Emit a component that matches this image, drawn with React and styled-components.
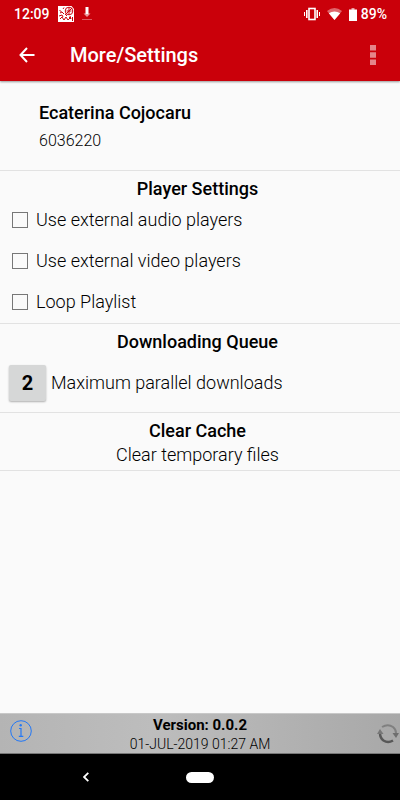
import React from "react";
import styled, { createGlobalStyle } from "styled-components";

const Global = createGlobalStyle`
  *, *::before, *::after { box-sizing: border-box; }
  body { margin: 0; background: #fafafa; }
  button, input { font: inherit; color: inherit; }
  svg { display: block; flex: none; }
`;

const Screen = styled.div`
  min-height: 100vh;
  display: flex;
  flex-direction: column;
  background: #fafafa;
  color: #000;
  font-family: Roboto, "Noto Sans", sans-serif;
  font-size: 18px;
  font-weight: 300;
  line-height: 24px;
`;

const Header = styled.header`
  background: #ca000a;
  color: #fff;
  box-shadow: 0 1px 2px rgba(0, 0, 0, 0.4);
`;

const StatusBar = styled.div`
  height: 28px;
  padding: 0 13px 0 14px;
  display: flex;
  align-items: center;
  justify-content: space-between;
  font-size: 14px;
  font-weight: 500;
`;

const StatusGroup = styled.div`
  display: flex;
  align-items: center;
  gap: ${(p) => p.$gap}px;
`;

const AppBar = styled.div`
  height: 53px;
  padding: 0 15px;
  display: flex;
  align-items: center;
`;

const IconButton = styled.button`
  width: 24px;
  height: 24px;
  padding: 0;
  border: 0;
  background: none;
  display: grid;
  place-items: center;
  cursor: pointer;
`;

const Title = styled.h1`
  flex: 1;
  margin: 0 0 0 31px;
  font-size: 20px;
  font-weight: 500;
`;

const Main = styled.main`
  flex: 1;
`;

const Section = styled.section`
  border-bottom: 1px solid #e2e2e2;
  padding-bottom: ${(p) => p.$bottom || 0}px;
`;

const Profile = styled(Section)`
  padding: 20px 39px 18px;
`;

const Name = styled.h2`
  margin: 0;
  font-size: 18px;
  font-weight: 500;
`;

const UserId = styled.p`
  margin: 5px 0 0;
  font-size: 16px;
  line-height: 22px;
`;

const Heading = styled.h2`
  margin: 0;
  padding: 6px 5px 0 0;
  font-size: 18px;
  font-weight: 500;
  text-align: center;
`;

const CheckList = styled.div`
  margin-top: -2px;
  padding-bottom: 1px;
`;

const CheckRow = styled.label`
  height: 41px;
  padding-left: 12px;
  display: flex;
  align-items: center;
  gap: 8px;
`;

const Checkbox = styled.input`
  appearance: none;
  width: 16px;
  height: 16px;
  margin: 0;
  border: 1px solid #777;
  &:checked { background: #777; }
`;

const CountRow = styled.div`
  padding: 11px 9px;
  display: flex;
  align-items: center;
  gap: 5px;
`;

const CountButton = styled.button`
  width: 37px;
  height: 36px;
  padding: 0;
  border: 0;
  border-radius: 2px;
  background: #d6d7d7;
  box-shadow: 0 1px 2px rgba(0, 0, 0, 0.3);
  font-size: 20px;
  font-weight: 700;
`;

const ClearButton = styled.button`
  display: block;
  width: 100%;
  padding: 0 5px 0 0;
  border: 0;
  background: none;
  text-align: center;
`;

const Footer = styled.footer`
  height: 41px;
  padding-left: 9px;
  display: grid;
  grid-template-columns: 24px 1fr 24px;
  background: linear-gradient(90deg, #b4b4b4, #bdbdbd 38%, #a8a8a8);
  border-top: 1px solid #c8c8c8;
  border-bottom: 1px solid #777;
`;

const FooterButton = styled(IconButton)`
  margin-top: ${(p) => p.$top}px;
`;

const Version = styled.div`
  padding: 2px 9px 0 0;
  text-align: center;
  line-height: 19px;
`;

const VersionName = styled.div`
  font-size: 15px;
  font-weight: 700;
`;

const VersionDate = styled.div`
  font-size: 14px;
`;

const NavBar = styled.nav`
  height: 46px;
  display: grid;
  grid-template-columns: 43% 14% 43%;
  align-items: center;
  justify-items: center;
  background: #000;
`;

const HomePill = styled.button`
  width: 28px;
  height: 11px;
  padding: 0;
  border: 0;
  border-radius: 6px;
  background: #fff;
`;

const AppIcon = () => (
  <svg width="16" height="16" viewBox="0 0 16 16" aria-hidden="true">
    <path d="M0 0h16v16H0z" fill="#fff" />
    <path d="M1.500 4.500l2 1M2 7l2-1 2 2M1 10l3-1 1 2M2 13l2-2 2 3 2-3 2 3 2-2M7 8l2 2M6 1.500L5 3M12 10l1 3-2-2M14.500 11v4" fill="none" stroke="#ca000a" />
    <circle cx="11" cy="5" r="3.800" fill="none" stroke="#ca000a" />
    <path d="M7 9l7-7M11 2v6M8.500 5h5" fill="none" stroke="#ca000a" />
    <path d="M13.500 0H16v3z" fill="#ca000a" />
  </svg>
);

const DownloadIcon = () => (
  <svg width="10" height="14" viewBox="0 0 10 14" aria-hidden="true">
    <path d="M3.500 0h3v7h-3z" fill="#fff" />
    <path d="M1.500 6.500h7L5 10z" fill="#fff" opacity=".6" />
    <path d="M0 12.500h10" stroke="#fff" opacity=".35" />
  </svg>
);

const VibrateIcon = () => (
  <svg width="16" height="14" viewBox="0 0 16 14" fill="none" stroke="#fff" aria-hidden="true">
    <rect x="5" y="1.500" width="6" height="11" strokeWidth="1.600" />
    <path d="M2.800 3v8M13.200 3v8" strokeWidth="1.600" />
    <path d="M.5 5v4M15.500 5v4" />
  </svg>
);

const WifiIcon = () => (
  <svg width="15" height="12" viewBox="0 0 15 12" fill="#fff" aria-hidden="true">
    <path d="M0 3Q7.500-3 15 3L7.500 12z" opacity=".4" />
    <path d="M1.800 5.300Q7.500 1.500 13.200 5.300L7.500 12z" />
  </svg>
);

const BatteryIcon = () => (
  <svg width="8" height="13" viewBox="0 0 8 13" fill="#fff" aria-hidden="true">
    <path d="M2.500 0h3v2h-3z" opacity=".6" />
    <path d="M0 1.500h8V13H0z" />
  </svg>
);

const BackArrow = () => (
  <svg width="16" height="16" viewBox="0 0 16 16" fill="none" stroke="#fff" strokeWidth="2" aria-hidden="true">
    <path d="M15.500 8H1.500M8 1L1.500 8 8 15" />
  </svg>
);

const MoreIcon = () => (
  <svg width="6" height="20" viewBox="0 0 6 20" fill="#e5858a" aria-hidden="true">
    <path d="M0 0h6v5.500H0zM0 7.200h6v5.500H0zM0 14.500h6V20H0z" />
  </svg>
);

const InfoIcon = () => (
  <svg width="22" height="22" viewBox="0 0 22 22" fill="none" stroke="#2478f5" aria-hidden="true">
    <circle cx="11" cy="11" r="10.300" />
    <path d="M9 8.500h2V16M8.800 16.300h4.500" strokeWidth="1.200" />
    <circle cx="10.700" cy="5.300" r="1.200" fill="#2478f5" stroke="none" />
  </svg>
);

const SyncIcon = () => (
  <svg width="22" height="20" viewBox="0 0 22 20" fill="none" aria-hidden="true">
    <path d="M5 3Q11-.5 16 3Q19 5.500 19 9" stroke="#808080" strokeWidth="2" />
    <path d="M15.500 9H22l-3 5z" fill="#6e6e6e" />
    <path d="M3 9Q3 14 6.500 16.500Q11 19.500 16 16.500" stroke="#585858" strokeWidth="2.500" />
    <path d="M0 10l3-5 3.500 5z" fill="#777" />
  </svg>
);

const NavBackIcon = () => (
  <svg width="6" height="10" viewBox="0 0 6 10" fill="none" stroke="#fff" strokeWidth="1.800" aria-hidden="true">
    <path d="M5.300.8L1 5l4.300 4.200" />
  </svg>
);

const playerOptions = [
  "Use external audio players",
  "Use external video players",
  "Loop Playlist",
];

export default function App() {
  return (
    <Screen>
      <Global />
      <Header>
        <StatusBar>
          <StatusGroup $gap={8}>
            <span>12:09</span>
            <AppIcon />
            <DownloadIcon />
          </StatusGroup>
          <StatusGroup $gap={4}>
            <StatusGroup $gap={7}>
              <VibrateIcon />
              <WifiIcon />
              <BatteryIcon />
            </StatusGroup>
            <span>89%</span>
          </StatusGroup>
        </StatusBar>
        <AppBar>
          <IconButton aria-label="Back"><BackArrow /></IconButton>
          <Title>More/Settings</Title>
          <IconButton aria-label="More options"><MoreIcon /></IconButton>
        </AppBar>
      </Header>
      <Main>
        <Profile>
          <Name>Ecaterina Cojocaru</Name>
          <UserId>6036220</UserId>
        </Profile>
        <Section>
          <Heading>Player Settings</Heading>
          <CheckList>
            {playerOptions.map((option) => (
              <CheckRow key={option}>
                <Checkbox type="checkbox" />
                <span>{option}</span>
              </CheckRow>
            ))}
          </CheckList>
        </Section>
        <Section>
          <Heading>Downloading Queue</Heading>
          <CountRow>
            <CountButton aria-describedby="parallel-label">2</CountButton>
            <span id="parallel-label">Maximum parallel downloads</span>
          </CountRow>
        </Section>
        <Section $bottom={3}>
          <Heading>Clear Cache</Heading>
          <ClearButton>Clear temporary files</ClearButton>
        </Section>
      </Main>
      <Footer>
        <FooterButton $top={5} aria-label="Information"><InfoIcon /></FooterButton>
        <Version>
          <VersionName>Version: 0.0.2</VersionName>
          <VersionDate>01-JUL-2019 01:27 AM</VersionDate>
        </Version>
        <FooterButton $top={8} aria-label="Refresh"><SyncIcon /></FooterButton>
      </Footer>
      <NavBar>
        <IconButton aria-label="System back"><NavBackIcon /></IconButton>
        <HomePill aria-label="Home" />
      </NavBar>
    </Screen>
  );
}
